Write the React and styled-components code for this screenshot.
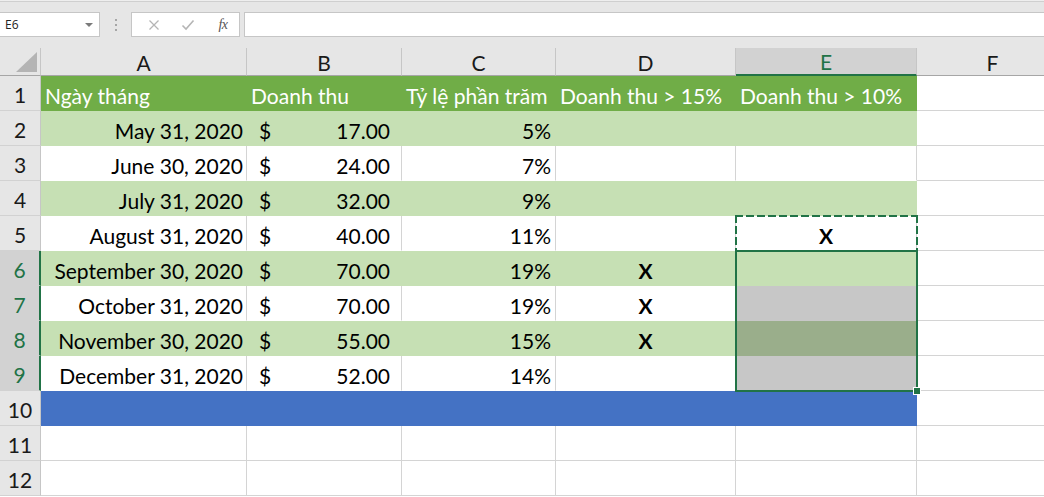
import React from 'react';
import styled, { createGlobalStyle } from 'styled-components';

const GlobalStyle = createGlobalStyle`
  html, body { margin: 0; padding: 0; background: #fff; overflow: hidden; }
  body { font-family: Lato, "Noto Sans", sans-serif; }
`;

const Window = styled.div`
  width: 1044px;
  height: 497px;
  overflow: hidden;
  display: flex;
  flex-direction: column;
`;

const FormulaBar = styled.div`
  flex: none;
  height: 48px;
  box-sizing: border-box;
  padding-top: 12px;
  display: flex;
  align-items: flex-start;
  background: linear-gradient(#eeeeee 0 1px, #cfcfcf 1px 2px, #e6e6e6 2px);
`;

const NameBox = styled.div`
  box-sizing: border-box;
  width: 100px;
  height: 25px;
  background: #fff;
  border: 1px solid #c6c6c6;
  border-left: none;
  display: flex;
  align-items: center;
  justify-content: space-between;
  padding: 0 6px 0 5px;
  font-family: "Open Sans", "Noto Sans", sans-serif;
  font-size: 12px;
  color: #222;
`;

const DropArrow = styled.span`
  width: 0;
  height: 0;
  border-left: 4px solid transparent;
  border-right: 4px solid transparent;
  border-top: 4px solid #7a7a7a;
`;

const Grip = styled.div`
  width: 31px;
  height: 25px;
  display: flex;
  flex-direction: column;
  align-items: center;
  justify-content: center;
  gap: 3px;
  & > i {
    display: block;
    width: 2px;
    height: 2px;
    background: #a6a6a6;
  }
`;

const ButtonBox = styled.div`
  box-sizing: border-box;
  width: 109px;
  height: 25px;
  background: #fff;
  border: 1px solid #c6c6c6;
  display: flex;
  align-items: center;
  padding-left: 12px;
  gap: 14px;
`;

const IconSlot = styled.span`
  width: 20px;
  height: 20px;
  display: flex;
  align-items: center;
  justify-content: center;
`;

const Fx = styled.span`
  font-family: "Liberation Serif", "DejaVu Serif", serif;
  font-style: italic;
  font-size: 14px;
  color: #555;
  letter-spacing: -0.5px;
  margin-left: 2px;
`;

const FormulaInput = styled.div`
  box-sizing: border-box;
  flex: 1;
  margin-left: 4px;
  height: 25px;
  background: #fff;
  border: 1px solid #c6c6c6;
  border-right: none;
`;

const Sheet = styled.div`
  display: grid;
  grid-template-columns: 41px 206px 155px 154px 180px 181px 152px;
  grid-template-rows: 28px repeat(12, 35px);
  width: 1069px;
  flex: none;
`;

const Corner = styled.div`
  grid-row: 1;
  grid-column: 1;
  box-sizing: border-box;
  background: #e6e6e6;
  border-right: 1px solid #c6c6c6;
  border-bottom: 1px solid #a6a6a6;
  position: relative;
  &::after {
    content: '';
    position: absolute;
    right: 3px;
    bottom: 3px;
    width: 21px;
    height: 20px;
    background: #b4b4b4;
    clip-path: polygon(100% 0, 100% 100%, 0 100%);
  }
`;

const ColHeader = styled.div`
  grid-row: 1;
  grid-column: ${(p) => p.$col};
  box-sizing: border-box;
  display: flex;
  align-items: center;
  justify-content: center;
  padding-top: 1px;
  background: ${(p) => (p.$selected ? '#d2d2d2' : '#e6e6e6')};
  color: ${(p) => (p.$selected ? '#217346' : '#1a1a1a')};
  border-right: 1px solid #c6c6c6;
  border-bottom: ${(p) => (p.$selected ? '2px solid #217346' : '1px solid #a6a6a6')};
  font-size: 21px;
`;

const RowHeader = styled.div`
  grid-row: ${(p) => p.$row};
  grid-column: 1;
  box-sizing: border-box;
  display: flex;
  align-items: center;
  justify-content: center;
  padding-top: 2px;
  background: ${(p) => (p.$selected ? '#d2d2d2' : '#e6e6e6')};
  color: ${(p) => (p.$selected ? '#217346' : '#1a1a1a')};
  border-right: ${(p) => (p.$selected ? '2px solid #217346' : '1px solid #c6c6c6')};
  border-bottom: 1px solid #d2d2d2;
  font-size: 21px;
`;

const JUSTIFY = {
  left: 'flex-start',
  right: 'flex-end',
  center: 'center',
  split: 'space-between',
};

const Cell = styled.div`
  grid-row: ${(p) => p.$row};
  grid-column: ${(p) => p.$col};
  box-sizing: border-box;
  display: flex;
  align-items: center;
  justify-content: ${(p) => JUSTIFY[p.$align || 'left']};
  padding: 4px ${(p) => p.$pr ?? 4}px 0 ${(p) => p.$pl ?? 4}px;
  background: ${(p) => p.$tone.bg};
  color: ${(p) => p.$tone.fg};
  border-right: 1px solid ${(p) => p.$tone.v};
  border-bottom: 1px solid ${(p) => p.$tone.h};
  font-size: 21px;
  font-weight: ${(p) => (p.$bold ? 700 : 400)};
  white-space: nowrap;
  overflow: visible;
`;

const Selection = styled.div`
  grid-column: 6;
  grid-row: 7 / 11;
  margin: -1px;
  border: 2px solid #217346;
  position: relative;
  z-index: 2;
  pointer-events: none;
`;

const FillHandle = styled.span`
  position: absolute;
  right: -5px;
  bottom: -5px;
  width: 6px;
  height: 6px;
  background: #217346;
  border: 1px solid #fff;
`;

const Marquee = styled.div`
  grid-column: 6;
  grid-row: 6;
  margin: -1px;
  position: relative;
  z-index: 2;
  pointer-events: none;
  background-image:
    repeating-linear-gradient(90deg, #217346 0 8px, transparent 8px 11px),
    repeating-linear-gradient(90deg, #217346 0 8px, transparent 8px 11px),
    repeating-linear-gradient(180deg, #217346 0 8px, transparent 8px 11px),
    repeating-linear-gradient(180deg, #217346 0 8px, transparent 8px 11px);
  background-size: 100% 2px, 100% 2px, 2px 100%, 2px 100%;
  background-position: top left, bottom left, top left, top right;
  background-repeat: no-repeat;
`;

const TONES = {
  head: { bg: '#70ad47', fg: '#ffffff', v: '#70ad47', h: '#70ad47' },
  band: { bg: '#c6e0b4', fg: '#000000', v: '#c6e0b4', h: '#c6e0b4' },
  plain: { bg: '#ffffff', fg: '#000000', v: '#d4d4d4', h: '#ffffff' },
  blue: { bg: '#4472c4', fg: '#ffffff', v: '#4472c4', h: '#4472c4' },
  empty: { bg: '#ffffff', fg: '#000000', v: '#d4d4d4', h: '#d4d4d4' },
  selPlain: { bg: '#c7c7c7', fg: '#000000', v: '#c7c7c7', h: '#c7c7c7' },
  selBand: { bg: '#9aae8b', fg: '#000000', v: '#9aae8b', h: '#9aae8b' },
};

const COLS = ['A', 'B', 'C', 'D', 'E', 'F'];
const HEAD = ['Ngày tháng', 'Doanh thu', 'Tỷ lệ phần trăm', 'Doanh thu > 15%', 'Doanh thu > 10%'];
const DATA = [
  { date: 'May 31, 2020', amt: '17.00', pct: '5%' },
  { date: 'June 30, 2020', amt: '24.00', pct: '7%' },
  { date: 'July 31, 2020', amt: '32.00', pct: '9%' },
  { date: 'August 31, 2020', amt: '40.00', pct: '11%', e: 'X' },
  { date: 'September 30, 2020', amt: '70.00', pct: '19%', d: 'X' },
  { date: 'October 31, 2020', amt: '70.00', pct: '19%', d: 'X' },
  { date: 'November 30, 2020', amt: '55.00', pct: '15%', d: 'X' },
  { date: 'December 31, 2020', amt: '52.00', pct: '14%' },
];

const SELECTED_ROWS = [6, 7, 8, 9];

function CloseIcon() {
  return (
    <svg width="12" height="12" viewBox="0 0 12 12">
      <path d="M1.5 1.5 L10.5 10.5 M10.5 1.5 L1.5 10.5" stroke="#b5b5b5" strokeWidth="1.3" fill="none" />
    </svg>
  );
}

function CheckIcon() {
  return (
    <svg width="14" height="12" viewBox="0 0 14 12">
      <path d="M1.5 6.5 L5 10 L12.5 1.5" stroke="#b5b5b5" strokeWidth="1.6" fill="none" />
    </svg>
  );
}

function dataRowCells(rowNum, gr, row) {
  const banded = rowNum % 2 === 0;
  const base = banded ? TONES.band : TONES.plain;
  let eTone = base;
  if (rowNum === 7 || rowNum === 9) eTone = TONES.selPlain;
  if (rowNum === 8) eTone = TONES.selBand;
  return [
    <Cell key="A" $row={gr} $col={2} $tone={base} $align="right" $pr={3}>{row.date}</Cell>,
    <Cell key="B" $row={gr} $col={3} $tone={base} $align="split" $pl={12} $pr={11}>
      <span>$</span>
      <span>{row.amt}</span>
    </Cell>,
    <Cell key="C" $row={gr} $col={4} $tone={base} $align="right" $pr={4}>{row.pct}</Cell>,
    <Cell key="D" $row={gr} $col={5} $tone={base} $align="center" $bold>{row.d || ''}</Cell>,
    <Cell key="E" $row={gr} $col={6} $tone={eTone} $align="center" $bold>{row.e || ''}</Cell>,
    <Cell key="F" $row={gr} $col={7} $tone={TONES.empty} />,
  ];
}

export default function App() {
  const gridRows = [];
  for (let r = 1; r <= 12; r++) {
    const gr = r + 1;
    const selected = SELECTED_ROWS.includes(r);
    const items = [<RowHeader key={`h${r}`} $row={gr} $selected={selected}>{r}</RowHeader>];
    if (r === 1) {
      HEAD.forEach((t, i) =>
        items.push(<Cell key={`c${i}`} $row={gr} $col={i + 2} $tone={TONES.head}>{t}</Cell>)
      );
      items.push(<Cell key="F" $row={gr} $col={7} $tone={TONES.empty} />);
    } else if (r <= 9) {
      items.push(...dataRowCells(r, gr, DATA[r - 2]));
    } else if (r === 10) {
      COLS.slice(0, 5).forEach((c, i) =>
        items.push(<Cell key={c} $row={gr} $col={i + 2} $tone={TONES.blue} />)
      );
      items.push(<Cell key="F" $row={gr} $col={7} $tone={TONES.empty} />);
    } else {
      COLS.forEach((c, i) => items.push(<Cell key={c} $row={gr} $col={i + 2} $tone={TONES.empty} />));
    }
    gridRows.push(<React.Fragment key={r}>{items}</React.Fragment>);
  }

  return (
    <Window>
      <GlobalStyle />
      <FormulaBar>
        <NameBox>
          <span>E6</span>
          <DropArrow />
        </NameBox>
        <Grip>
          <i />
          <i />
          <i />
        </Grip>
        <ButtonBox>
          <IconSlot><CloseIcon /></IconSlot>
          <IconSlot><CheckIcon /></IconSlot>
          <IconSlot><Fx>fx</Fx></IconSlot>
        </ButtonBox>
        <FormulaInput />
      </FormulaBar>
      <Sheet>
        <Corner />
        {COLS.map((c, i) => (
          <ColHeader key={c} $col={i + 2} $selected={c === 'E'}>{c}</ColHeader>
        ))}
        {gridRows}
        <Marquee />
        <Selection>
          <FillHandle />
        </Selection>
      </Sheet>
    </Window>
  );
}
